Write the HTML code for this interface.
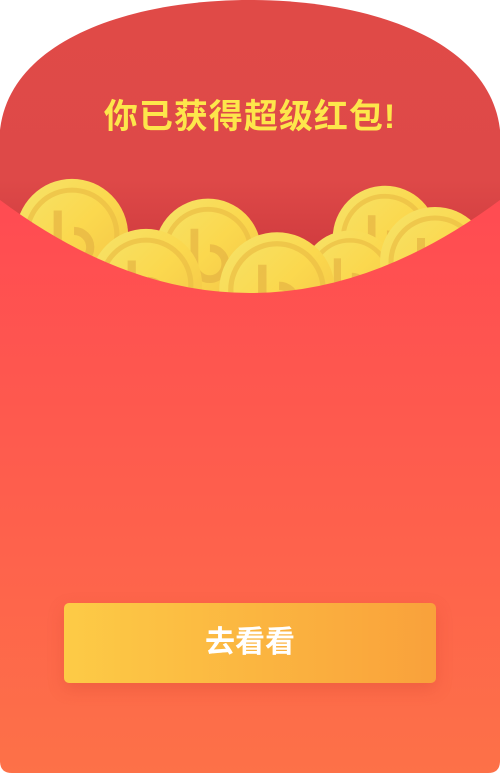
<!DOCTYPE html>
<html><head><meta charset="utf-8"><style>
html,body{margin:0;padding:0;background:#fff;}
body{width:500px;height:773px;position:relative;overflow:hidden;font-family:"Liberation Sans","Noto Sans CJK SC",sans-serif;}
svg{position:absolute;left:0;top:0}
.t{position:absolute;left:0;width:500px;top:89px;text-align:center;font-size:34px;font-weight:bold;color:#fde64b;letter-spacing:1px}
.btn{position:absolute;left:64px;top:603px;width:372px;height:80px;border-radius:5px;background:linear-gradient(90deg,#fdcb46,#f9a13b);box-shadow:0 6px 16px rgba(200,60,40,0.25);color:#fff;font-size:30px;font-weight:bold;text-align:center;line-height:80px}
</style></head><body>
<svg width="500" height="773" viewBox="0 0 500 773">
<defs>
<linearGradient id="bk" x1="0" y1="0" x2="0" y2="1"><stop offset="0" stop-color="#e04a47"/><stop offset="0.6" stop-color="#de4948"/><stop offset="1" stop-color="#c73238"/></linearGradient>
<linearGradient id="fr" x1="0" y1="0" x2="0" y2="1"><stop offset="0" stop-color="#ff4b52"/><stop offset="1" stop-color="#fd7148"/></linearGradient>
<linearGradient id="cn" x1="0" y1="0" x2="1" y2="1"><stop offset="0" stop-color="#f5e36a"/><stop offset="0.5" stop-color="#fbd84e"/><stop offset="1" stop-color="#f2c245"/></linearGradient>
<g id="coin"><circle r="55" fill="url(#cn)"/><circle r="44" fill="none" stroke="#ebbd45" stroke-width="5" opacity="0.7"/><path d="M-14,-24 L-14,14 A16,16 0 1 0 2,-4" fill="none" stroke="#e6b443" stroke-width="8" opacity="0.7"/></g>
</defs>
<path d="M0,300 L0,130 C10,40 130,0 250,0 C370,0 490,40 500,130 L500,300 Z" fill="url(#bk)"/>
<use href="#coin" transform="translate(72,235) scale(1.02)"/>
<use href="#coin" transform="translate(385,238) scale(0.95)"/>
<use href="#coin" transform="translate(208,252) scale(0.97)"/>
<use href="#coin" transform="translate(350,280) scale(0.9)"/>
<use href="#coin" transform="translate(435,262)"/>
<use href="#coin" transform="translate(146,285) scale(1.02)"/>
<use href="#coin" transform="translate(277,290) scale(1.05)"/>
<path d="M0,200 Q250,386 500,200 L500,761 Q500,773 488,773 L12,773 Q0,773 0,761 Z" fill="url(#fr)"/>
</svg>
<div class="t">你已获得超级红包!</div>
<div class="btn">去看看</div>
</body></html>
